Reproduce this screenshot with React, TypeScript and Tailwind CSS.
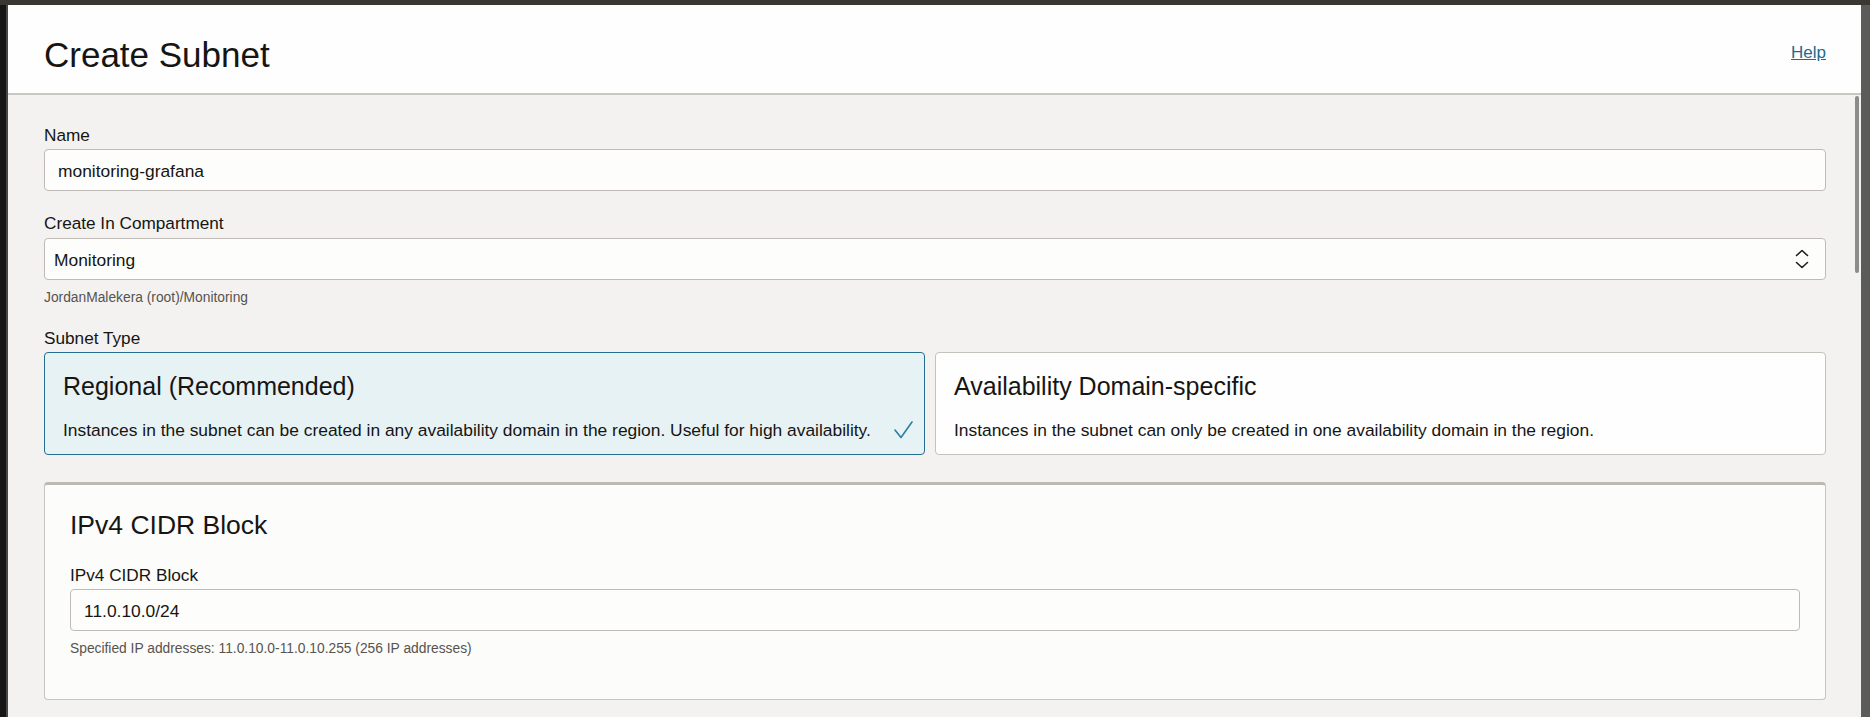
import React from "react";

const font = { fontFamily: '"Liberation Sans", Arial, Helvetica, sans-serif' };

function Field({ children, padX = "px-[13px]", right }: { children: React.ReactNode; padX?: string; right?: React.ReactNode }) {
  return (
    <div className={`h-[42px] rounded-[4px] border border-[#bfbab5] bg-[#fdfdfc] ${padX} pt-[2px] flex items-center justify-between text-[17.4px] leading-[20px] text-[#161513]`}>
      <span>{children}</span>
      {right}
    </div>
  );
}

function ChevronsUpDown() {
  return (
    <svg width="14" height="20" viewBox="0 0 14 20" fill="none" stroke="#1f1e1c" strokeWidth="1.6" strokeLinecap="round" strokeLinejoin="round" className="-mt-[2px]">
      <polyline points="1.5,6.5 7,1.5 12.5,6.5" />
      <polyline points="1.5,13.5 7,18.5 12.5,13.5" />
    </svg>
  );
}

function Check() {
  return (
    <svg width="19" height="18" viewBox="0 0 19 18" fill="none" stroke="#2a7fa2" strokeWidth="1.6" strokeLinecap="round" strokeLinejoin="round">
      <polyline points="1,9 7,16.5 18,1" />
    </svg>
  );
}

export default function App() {
  return (
    <div style={font} className="w-[1870px] h-[717px] overflow-hidden flex flex-col bg-[#3a3631]">
      <div className="h-[5px] shrink-0 bg-[#3a3631]" />
      <div className="flex flex-1 min-h-0">
        <div className="w-[6px] shrink-0 bg-[#161616]" />
        <div className="w-[2px] shrink-0 bg-[#474747]" />
        <div className="flex-1 flex flex-col min-w-0">
          <div className="h-[90px] shrink-0 border-b-2 border-[#cac6c1] bg-[#fefefe] flex justify-between items-start pl-[36px] pr-[35px]">
            <div className="mt-[30px] text-[35px] leading-[40px] text-[#161513]">Create Subnet</div>
            <a className="mt-[38px] text-[17px] leading-[20px] underline text-[#1d6b90]">Help</a>
          </div>
          <div className="flex-1 relative bg-[#f3f2f1] pl-[36px] pr-[35px] pt-[30px]">
            <div className="absolute right-[2px] top-[1px] w-[4px] h-[177px] rounded-full bg-[#8c8c8b]" />
            <div className="text-[17.2px] leading-[20px] text-[#161513] mb-[4px]">Name</div>
            <Field>monitoring-grafana</Field>

            <div className="mt-[22px] text-[17.2px] leading-[20px] text-[#161513] mb-[5px]">Create In Compartment</div>
            <Field padX="pl-[9px] pr-[16px]" right={<ChevronsUpDown />}>Monitoring</Field>
            <div className="mt-[10px] text-[13.8px] leading-[16px] text-[#57534e]">JordanMalekera (root)/Monitoring</div>

            <div className="mt-[22px] text-[17.2px] leading-[20px] text-[#161513] mb-[4px]">Subnet Type</div>
            <div className="grid grid-cols-[881px_891px] gap-[10px]">
              <div className="h-[103px] rounded-[4px] border border-[#246f90] bg-[#e7f2f5] pl-[18px] pr-[11px] pt-[18px] text-[#161513]">
                <div className="text-[25px] leading-[30px]">Regional (Recommended)</div>
                <div className="mt-[19px] flex items-center justify-between text-[17.4px] leading-[20px]">
                  <span>Instances in the subnet can be created in any availability domain in the region. Useful for high availability.</span>
                  <Check />
                </div>
              </div>
              <div className="h-[103px] rounded-[4px] border border-[#c5c1bc] bg-[#fefefe] pl-[18px] pr-[11px] pt-[18px] text-[#161513]">
                <div className="text-[25px] leading-[30px]">Availability Domain-specific</div>
                <div className="mt-[19px] text-[17.4px] leading-[20px]">
                  Instances in the subnet can only be created in one availability domain in the region.
                </div>
              </div>
            </div>

            <div className="mt-[27px] rounded-[4px] border border-[#c8c4bf] border-t-[3px] border-t-[#bdb8b2] bg-[#fcfcfb] px-[25px] pt-[24px] pb-[42px]">
              <div className="text-[26.5px] leading-[32px] text-[#161513]">IPv4 CIDR Block</div>
              <div className="mt-[24px] text-[17.2px] leading-[20px] text-[#161513] mb-[4px]">IPv4 CIDR Block</div>
              <Field>11.0.10.0/24</Field>
              <div className="mt-[10px] text-[13.8px] leading-[16px] text-[#57534e]">
                Specified IP addresses: 11.0.10.0-11.0.10.255 (256 IP addresses)
              </div>
            </div>
          </div>
        </div>
        <div className="w-[9px] shrink-0 bg-[#5b5b59]" />
      </div>
    </div>
  );
}
